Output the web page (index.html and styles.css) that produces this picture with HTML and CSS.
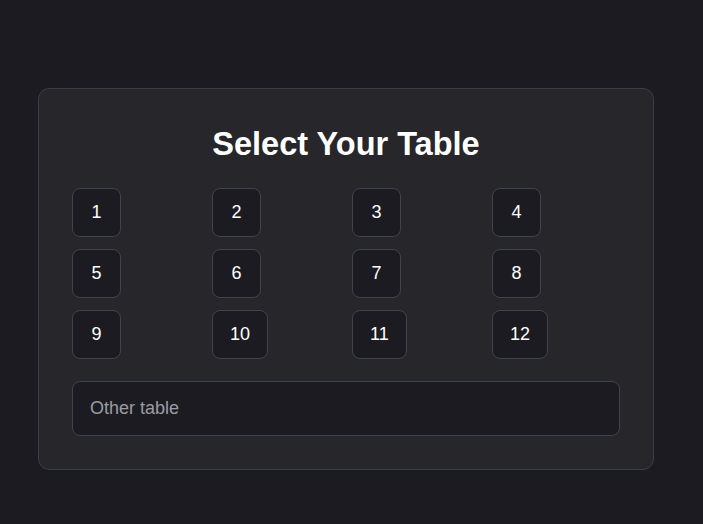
FILE: index.html
```html
<!DOCTYPE html>
<html lang="en">
<head>
<meta charset="utf-8">
<title>Select Your Table</title>
<link rel="stylesheet" href="styles.css">
</head>
<body>
  <main class="card">
    <h1 class="title">Select Your Table</h1>
    <div class="table-grid">
      <button class="table-btn">1</button>
      <button class="table-btn">2</button>
      <button class="table-btn">3</button>
      <button class="table-btn">4</button>
      <button class="table-btn">5</button>
      <button class="table-btn">6</button>
      <button class="table-btn">7</button>
      <button class="table-btn">8</button>
      <button class="table-btn">9</button>
      <button class="table-btn">10</button>
      <button class="table-btn">11</button>
      <button class="table-btn">12</button>
    </div>
    <input class="other-input" type="text" placeholder="Other table">
  </main>
</body>
</html>
```

FILE: styles.css
```css
html, body {
  margin: 0;
  background: #1c1b21;
}

body {
  padding: 88px 0 0 38px;
  font-family: "Liberation Sans", Arial, sans-serif;
  color: #ffffff;
  min-height: 524px;
  box-sizing: border-box;
}

.card {
  box-sizing: border-box;
  width: 616px;
  background: #27272b;
  border: 1px solid #3a3e48;
  border-radius: 11px;
  padding: 33px;
}

.title {
  margin: 0 0 22px;
  font-size: 32.5px;
  line-height: 44px;
  font-weight: 700;
  text-align: center;
  color: #ffffff;
}

.table-grid {
  display: grid;
  grid-template-columns: repeat(4, 1fr);
  gap: 12px;
  margin-bottom: 22px;
}

.table-btn {
  justify-self: start;
  box-sizing: border-box;
  min-width: 49px;
  height: 49px;
  padding: 0 17px;
  background: #1c1b21;
  border: 1px solid #40444d;
  border-radius: 8px;
  color: #ffffff;
  font-family: "Liberation Sans", Arial, sans-serif;
  font-size: 18px;
  cursor: pointer;
}

.other-input {
  display: block;
  box-sizing: border-box;
  width: 100%;
  height: 55px;
  padding: 0 17px;
  background: #1c1b21;
  border: 1px solid #40444d;
  border-radius: 8px;
  color: #ffffff;
  font-family: "Liberation Sans", Arial, sans-serif;
  font-size: 18px;
  outline: none;
}

.other-input::placeholder {
  color: #9b9ca3;
}
```
